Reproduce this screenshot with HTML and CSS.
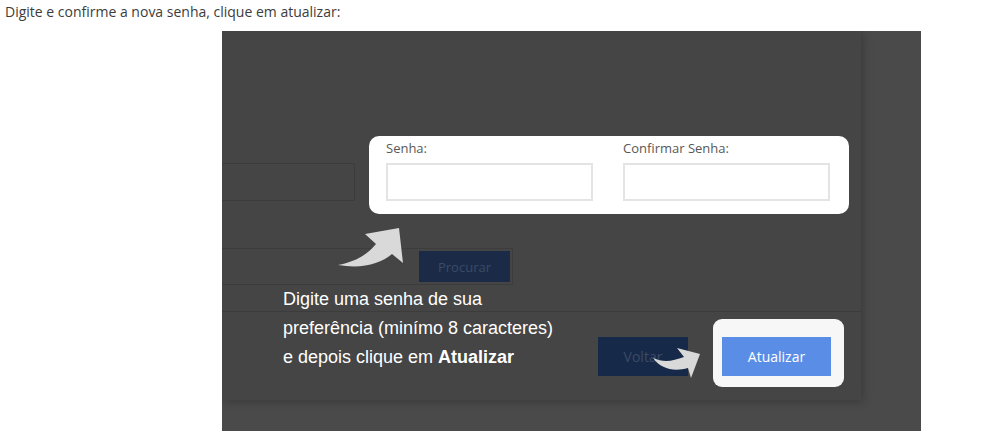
FILE: index.html
```html
<!DOCTYPE html>
<html lang="pt">
<head>
<meta charset="utf-8">
<title>Atualizar senha</title>
<link rel="stylesheet" href="styles.css">
</head>
<body>
<p class="intro">Digite e confirme a nova senha, clique em atualizar:</p>
<div class="shot">
  <div class="modal">
    <div class="modal-body">
      <div class="dim-input"></div>
      <div class="search">
        <span class="btn-dim">Procurar</span>
      </div>
    </div>
    <div class="modal-footer">
      <span class="btn-dim btn-voltar">Voltar</span>
    </div>
  </div>

  <div class="hl hl-fields">
    <div class="field">
      <label class="lbl">Senha:</label>
      <div class="inp"></div>
    </div>
    <div class="field">
      <label class="lbl">Confirmar Senha:</label>
      <div class="inp"></div>
    </div>
  </div>

  <div class="hl hl-btn">
    <span class="btn-primary">Atualizar</span>
  </div>

  <p class="note">Digite uma senha de sua<br>preferência (minímo 8 caracteres)<br>e depois clique em <b>Atualizar</b></p>

  <svg class="arrows" width="699" height="400" viewBox="0 0 699 400">
    <g transform="translate(-222,-31)" fill="#d9d9d9">
      <path d="M338,265 C354,262 366,256 376,244 L365,234 L399,228 L403,263 L392,254 C380,264 362,269 338,265 Z"/>
      <path d="M653,358 C664,363 673,361 684,357 L677,348 L700,354 L691,378 L688,368 C674,372 661,369 653,358 Z"/>
    </g>
  </svg>
</div>
</body>
</html>
```

FILE: styles.css
```css
html, body {
  margin: 0;
  padding: 0;
  background: #ffffff;
}

body {
  font-family: "Open Sans", "Liberation Sans", sans-serif;
}

.intro {
  margin: 0;
  padding: 2px 0 0 5px;
  font-size: 14px;
  line-height: 19px;
  color: #3c3c3c;
}

.shot {
  position: relative;
  margin: 10px 0 0 222px;
  width: 699px;
  height: 400px;
  background: #4a4a4a;
  overflow: hidden;
}

.modal {
  width: 639px;
  height: 369px;
  background: #454545;
  display: flex;
  flex-direction: column;
  box-shadow: 2px 2px 9px rgba(0, 0, 0, 0.22);
}

.modal-body {
  flex: 1;
  padding-top: 132px;
}

.dim-input {
  margin-left: -60px;
  width: 193px;
  height: 38px;
  box-sizing: border-box;
  border: 1px solid #3c3c3c;
}

.search {
  margin: 47px 0 0 -60px;
  width: 351px;
  height: 37px;
  box-sizing: border-box;
  border: 1px solid #3c3c3c;
  display: flex;
  justify-content: flex-end;
  align-items: center;
  padding-right: 2px;
}

.btn-dim {
  display: flex;
  align-items: center;
  justify-content: center;
  width: 91px;
  height: 31px;
  background: #1b2a46;
  color: #3a4a67;
  font-size: 13px;
}

.modal-footer {
  height: 89px;
  box-sizing: border-box;
  border-top: 1px solid #3c3c3c;
  padding: 25px 0 0 376px;
}

.btn-voltar {
  width: 90px;
  height: 39px;
  background: #172948;
  font-size: 14px;
}

.hl {
  position: absolute;
  box-sizing: border-box;
}

.hl-fields {
  left: 147px;
  top: 105px;
  width: 480px;
  height: 78px;
  background: #ffffff;
  border-radius: 10px;
  padding: 3px 18px 0 17px;
  display: flex;
  gap: 30px;
}

.field {
  display: flex;
  flex-direction: column;
}

.lbl {
  font-size: 13px;
  line-height: 18px;
  color: #585858;
  margin-bottom: 6px;
}

.inp {
  width: 207px;
  height: 38px;
  box-sizing: border-box;
  border: 2px solid #e4e4e4;
  background: #ffffff;
}

.hl-btn {
  left: 491px;
  top: 288px;
  width: 131px;
  height: 68px;
  background: #f7f7f7;
  border-radius: 9px;
  padding: 18px 13px 11px 9px;
}

.btn-primary {
  display: flex;
  align-items: center;
  justify-content: center;
  width: 109px;
  height: 39px;
  background: #5a8de6;
  color: #ffffff;
  font-size: 14px;
}

.note {
  position: absolute;
  left: 61px;
  top: 254px;
  margin: 0;
  font-family: "Liberation Sans", Arial, sans-serif;
  font-size: 18px;
  line-height: 29px;
  color: #ffffff;
}

.arrows {
  position: absolute;
  left: 0;
  top: 0;
}
```
